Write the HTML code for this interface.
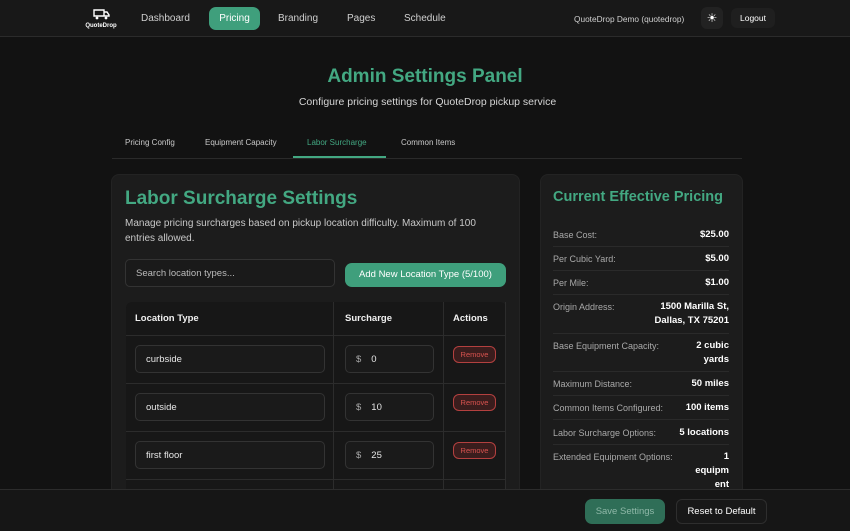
<!DOCTYPE html>
<html style="overflow:hidden;height:531px"><head><style>
*{box-sizing:border-box;margin:0;padding:0}
body{width:850px;height:531px;overflow:hidden;background:#121212;font-family:"Liberation Sans",sans-serif;color:#e6e6e6;position:relative}
.nav{position:absolute;left:0;top:0;width:850px;height:37px;background:#181818;border-bottom:1px solid #2b2b2b}
.abs{position:absolute}
.nl{font-size:10px;color:#cfcfcf;top:13px}
.g{color:#43a882}
.card{position:absolute;background:#1c1c1c;border-radius:8px;border:1px solid #232323}
.inp{position:absolute;background:#1a1a1a;border:1px solid #333;border-radius:5px;font-size:9.5px;color:#e6e6e6;padding-left:10px;display:flex;align-items:center}
.rm{position:absolute;left:453px;width:43px;height:17px;border:1px solid #b3403f;border-radius:6px;background:#3a1d1d;color:#d9534f;font-size:7.5px;text-align:center;line-height:15px}
.lab{position:absolute;left:553px;font-size:9px;color:#a9a9a9}
.val{position:absolute;right:121px;font-size:9.5px;font-weight:bold;color:#fff;text-align:right;line-height:14px}
.sep{position:absolute;left:553px;width:176px;height:1px;background:#2a2a2a}
.hl{position:absolute;height:1px;background:#2c2c2c}
.vl{position:absolute;width:1px;background:#2c2c2c}
</style></head><body>
<div class="nav">
 <div class="abs" style="left:84px;top:7px;width:34px;text-align:center">
  <svg width="20" height="12" viewBox="0 0 20 12"><path d="M3 2h10v6H3z M13 4h3l2 3v1h-5" fill="none" stroke="#fff" stroke-width="1.4"/><circle cx="6" cy="10" r="1.4" fill="#fff"/><circle cx="15" cy="10" r="1.4" fill="#fff"/></svg>
  <div style="font-size:6px;font-weight:bold;color:#fff;margin-top:-2px">QuoteDrop</div>
 </div>
 <div class="abs nl" style="left:141px">Dashboard</div>
 <div class="abs" style="left:209px;top:7px;width:51px;height:23px;background:#3f9f7c;border-radius:7px;color:#fff;font-size:10px;text-align:center;line-height:23px">Pricing</div>
 <div class="abs nl" style="left:278px">Branding</div>
 <div class="abs nl" style="left:347px">Pages</div>
 <div class="abs nl" style="left:404px">Schedule</div>
 <div class="abs" style="left:574px;top:14px;font-size:8.3px;color:#cfcfcf">QuoteDrop Demo (quotedrop)</div>
 <div class="abs" style="left:701px;top:7px;width:22px;height:22px;border-radius:6px;background:#222;text-align:center;line-height:22px;color:#fff;font-size:12px">☀</div>
 <div class="abs" style="left:731px;top:8px;width:44px;height:20px;border-radius:6px;background:#1f1f1f;font-size:8.5px;color:#fff;text-align:center;line-height:20px">Logout</div>
</div>
<div class="abs g" style="left:0;width:850px;top:66px;text-align:center;font-size:19px;font-weight:bold">Admin Settings Panel</div>
<div class="abs" style="left:0;width:855px;top:96px;text-align:center;font-size:10.5px;color:#d5d5d5">Configure pricing settings for QuoteDrop pickup service</div>
<div class="abs" style="left:112px;top:158px;width:630px;height:1px;background:#2a2a2a"></div>
<div class="abs" style="left:125px;top:138px;font-size:8px;color:#c8c8c8">Pricing Config</div>
<div class="abs" style="left:205px;top:138px;font-size:8px;color:#c8c8c8">Equipment Capacity</div>
<div class="abs g" style="left:307px;top:138px;font-size:8px">Labor Surcharge</div>
<div class="abs" style="left:293px;top:156px;width:93px;height:2px;background:#43a882"></div>
<div class="abs" style="left:401px;top:138px;font-size:8px;color:#c8c8c8">Common Items</div>

<div class="card" style="left:111px;top:174px;width:409px;height:357px;border-radius:8px 8px 0 0"></div>
<div class="abs g" style="left:125px;top:188px;font-size:19px;font-weight:bold">Labor Surcharge Settings</div>
<div class="abs" style="left:125px;top:216px;width:365px;font-size:10px;line-height:15px;color:#c8c8c8">Manage pricing surcharges based on pickup location difficulty. Maximum of 100 entries allowed.</div>
<div class="inp" style="left:125px;top:259px;width:210px;height:28px;color:#bbb">Search location types...</div>
<div class="abs" style="left:345px;top:263px;width:161px;height:24px;background:#3f9f7c;border-radius:7px;color:#fff;font-size:9.5px;text-align:center;line-height:24px">Add New Location Type (5/100)</div>

<div class="abs" style="left:126px;top:302px;width:380px;height:200px;background:#171717;border-radius:6px 6px 0 0"></div>
<div class="abs" style="left:135px;top:313px;font-size:9.5px;font-weight:bold;color:#f0f0f0">Location Type</div>
<div class="abs" style="left:345px;top:313px;font-size:9.5px;font-weight:bold;color:#f0f0f0">Surcharge</div>
<div class="abs" style="left:453px;top:313px;font-size:9.5px;font-weight:bold;color:#f0f0f0">Actions</div>
<div class="hl" style="left:126px;top:335px;width:380px"></div>
<div class="hl" style="left:126px;top:383px;width:380px"></div>
<div class="hl" style="left:126px;top:431px;width:380px"></div>
<div class="hl" style="left:126px;top:479px;width:380px"></div>
<div class="vl" style="left:333px;top:302px;height:190px"></div>
<div class="vl" style="left:443px;top:302px;height:190px"></div>
<div class="vl" style="left:505px;top:302px;height:190px"></div>

<div class="inp" style="left:135px;top:345px;width:190px;height:28px">curbside</div>
<div class="inp" style="left:345px;top:345px;width:89px;height:28px"><span style="color:#aaa;margin-right:10px">$</span>0</div>
<div class="rm" style="top:346px">Remove</div>
<div class="inp" style="left:135px;top:393px;width:190px;height:28px">outside</div>
<div class="inp" style="left:345px;top:393px;width:89px;height:28px"><span style="color:#aaa;margin-right:10px">$</span>10</div>
<div class="rm" style="top:394px">Remove</div>
<div class="inp" style="left:135px;top:441px;width:190px;height:28px">first floor</div>
<div class="inp" style="left:345px;top:441px;width:89px;height:28px"><span style="color:#aaa;margin-right:10px">$</span>25</div>
<div class="rm" style="top:442px">Remove</div>

<div class="card" style="left:540px;top:174px;width:203px;height:357px;border-radius:8px 8px 0 0"></div>
<div class="abs g" style="left:553px;top:189px;font-size:14.5px;font-weight:bold">Current Effective Pricing</div>
<div class="lab" style="top:230px">Base Cost:</div><div class="val" style="top:228px">$25.00</div>
<div class="sep" style="top:246px"></div>
<div class="lab" style="top:254px">Per Cubic Yard:</div><div class="val" style="top:252px">$5.00</div>
<div class="sep" style="top:270px"></div>
<div class="lab" style="top:278px">Per Mile:</div><div class="val" style="top:276px">$1.00</div>
<div class="sep" style="top:294px"></div>
<div class="lab" style="top:302px">Origin Address:</div><div class="val" style="top:300px">1500 Marilla St,<br>Dallas, TX 75201</div>
<div class="sep" style="top:333px"></div>
<div class="lab" style="top:341px">Base Equipment Capacity:</div><div class="val" style="top:339px">2 cubic<br>yards</div>
<div class="sep" style="top:371px"></div>
<div class="lab" style="top:379px">Maximum Distance:</div><div class="val" style="top:377px">50 miles</div>
<div class="sep" style="top:395px"></div>
<div class="lab" style="top:403px">Common Items Configured:</div><div class="val" style="top:401px">100 items</div>
<div class="sep" style="top:419px"></div>
<div class="lab" style="top:428px">Labor Surcharge Options:</div><div class="val" style="top:426px">5 locations</div>
<div class="sep" style="top:444px"></div>
<div class="lab" style="top:452px">Extended Equipment Options:</div><div class="val" style="top:450px">1<br>equipm<br>ent</div>

<div class="abs" style="left:0;top:489px;width:850px;height:42px;background:#161616;border-top:1px solid #2c2c2c"></div>
<div class="abs" style="left:585px;top:499px;width:80px;height:25px;background:#2f6e57;border-radius:7px;color:#8fb8a8;font-size:9.5px;text-align:center;line-height:25px">Save Settings</div>
<div class="abs" style="left:676px;top:499px;width:91px;height:25px;background:#181818;border:1px solid #2e2e2e;border-radius:6px;color:#fff;font-size:9.5px;text-align:center;line-height:23px">Reset to Default</div>
</body></html>
